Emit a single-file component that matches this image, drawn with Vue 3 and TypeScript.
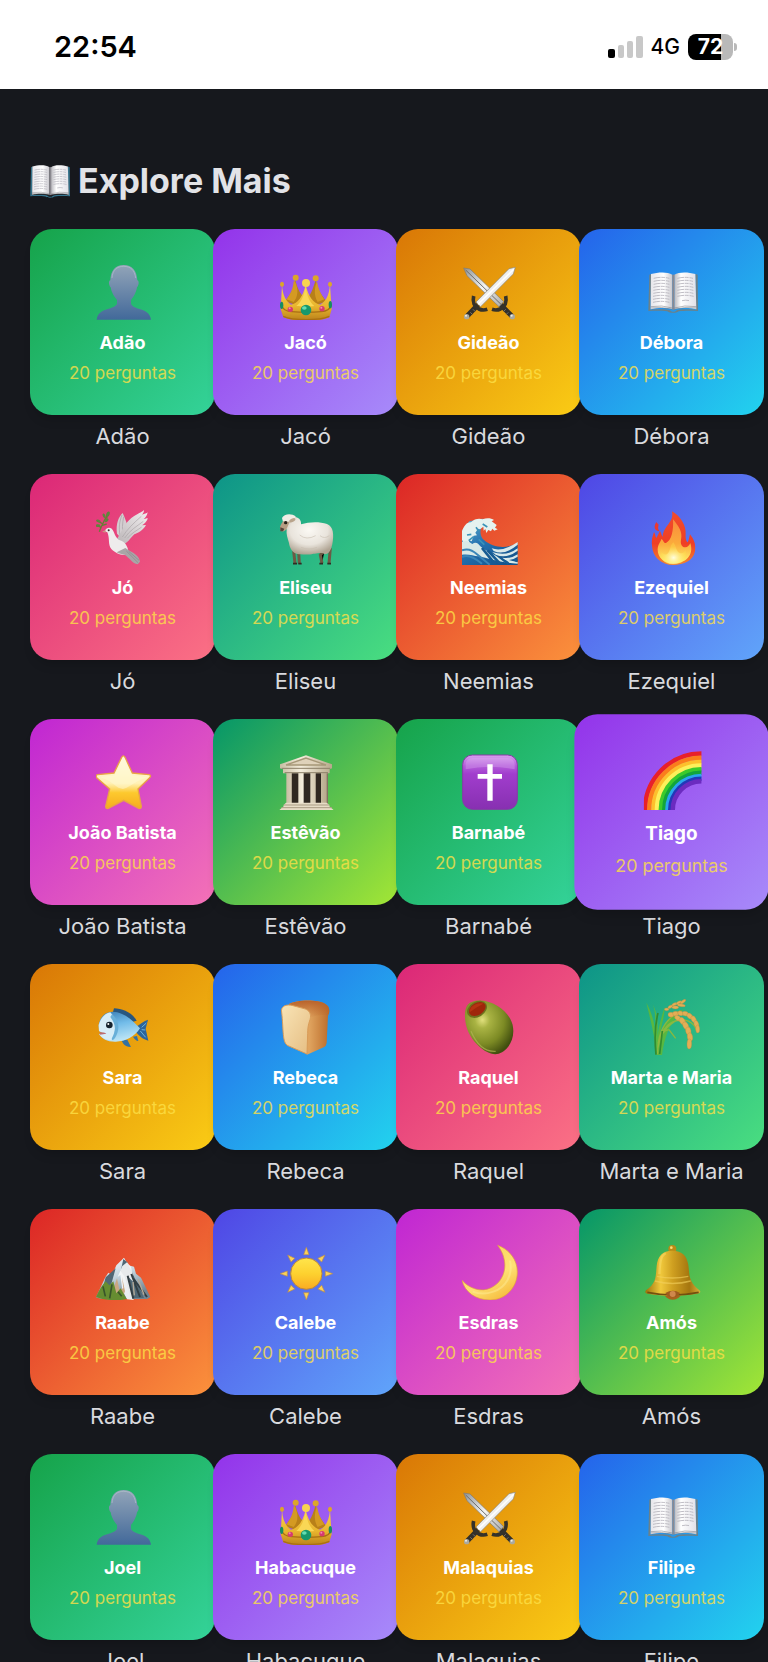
<script setup lang="ts">
interface Character {
  name: string
  icon: string
  tone: string
  raised?: boolean
}

const characters: Character[] = [
  { name: 'Adão', icon: 'person', tone: 'green' },
  { name: 'Jacó', icon: 'crown', tone: 'purple' },
  { name: 'Gideão', icon: 'swords', tone: 'amber' },
  { name: 'Débora', icon: 'book', tone: 'blue' },
  { name: 'Jó', icon: 'dove', tone: 'pink' },
  { name: 'Eliseu', icon: 'sheep', tone: 'teal' },
  { name: 'Neemias', icon: 'wave', tone: 'red' },
  { name: 'Ezequiel', icon: 'fire', tone: 'indigo' },
  { name: 'João Batista', icon: 'star', tone: 'fuchsia' },
  { name: 'Estêvão', icon: 'temple', tone: 'lime' },
  { name: 'Barnabé', icon: 'cross', tone: 'green' },
  { name: 'Tiago', icon: 'rainbow', tone: 'purple', raised: true },
  { name: 'Sara', icon: 'fish', tone: 'amber' },
  { name: 'Rebeca', icon: 'bread', tone: 'blue' },
  { name: 'Raquel', icon: 'olive', tone: 'pink' },
  { name: 'Marta e Maria', icon: 'rice', tone: 'teal' },
  { name: 'Raabe', icon: 'mountain', tone: 'red' },
  { name: 'Calebe', icon: 'sun', tone: 'indigo' },
  { name: 'Esdras', icon: 'moon', tone: 'fuchsia' },
  { name: 'Amós', icon: 'bell', tone: 'lime' },
  { name: 'Joel', icon: 'person', tone: 'green' },
  { name: 'Habacuque', icon: 'crown', tone: 'purple' },
  { name: 'Malaquias', icon: 'swords', tone: 'amber' },
  { name: 'Filipe', icon: 'book', tone: 'blue' },
]

const rainbowBands = [
  { r: 161, color: '#e8202a' },
  { r: 149, color: '#fb7d1c' },
  { r: 137, color: '#fdc02c' },
  { r: 127, color: '#fdf05a' },
  { r: 116, color: '#3ccb2b' },
  { r: 106, color: '#12a53c' },
  { r: 97, color: '#2aa6ee' },
  { r: 89, color: '#2338b8' },
  { r: 82, color: '#6b2bc0' },
]

const sunRays = [0, 45, 90, 135, 180, 225, 270, 315]
</script>

<template>
  <div class="page">
    <svg class="sprites" aria-hidden="true">
      <defs>
        <linearGradient id="g-person" x1="0" y1="0" x2="0" y2="1">
          <stop offset="0" stop-color="#92a4b8" /><stop offset="1" stop-color="#42699a" />
        </linearGradient>
        <linearGradient id="g-gold" x1="0" y1="0" x2="0" y2="1">
          <stop offset="0" stop-color="#f8d04c" /><stop offset="0.6" stop-color="#e8b52e" /><stop offset="1" stop-color="#b9801a" />
        </linearGradient>
        <linearGradient id="g-blade" x1="0" y1="0" x2="1" y2="1">
          <stop offset="0" stop-color="#8d9296" /><stop offset="0.5" stop-color="#f4f4f2" /><stop offset="1" stop-color="#a9a9a6" />
        </linearGradient>
        <linearGradient id="g-page" x1="0" y1="0" x2="1" y2="0">
          <stop offset="0" stop-color="#e6e5ea" /><stop offset="0.6" stop-color="#ffffff" /><stop offset="1" stop-color="#c9c8ce" />
        </linearGradient>
        <linearGradient id="g-page2" x1="0" y1="0" x2="1" y2="0">
          <stop offset="0" stop-color="#b8b7bd" /><stop offset="0.3" stop-color="#ffffff" /><stop offset="1" stop-color="#e2e1e8" />
        </linearGradient>
        <linearGradient id="g-wing" x1="1" y1="0" x2="0" y2="1">
          <stop offset="0" stop-color="#f3f0f1" /><stop offset="1" stop-color="#b9b3b5" />
        </linearGradient>
        <radialGradient id="g-wool" cx="0.5" cy="0.35" r="0.65">
          <stop offset="0" stop-color="#fbf9f4" /><stop offset="0.6" stop-color="#e9e4dc" /><stop offset="1" stop-color="#b0a493" />
        </radialGradient>
        <linearGradient id="g-wave" x1="0" y1="0" x2="0.7" y2="1">
          <stop offset="0" stop-color="#66b2cd" /><stop offset="0.5" stop-color="#2573b2" /><stop offset="1" stop-color="#15548d" />
        </linearGradient>
        <linearGradient id="g-fire" x1="0" y1="0" x2="0" y2="1">
          <stop offset="0" stop-color="#f04c2b" /><stop offset="0.6" stop-color="#ef3f25" /><stop offset="1" stop-color="#f5862e" />
        </linearGradient>
        <linearGradient id="g-flame" x1="0" y1="0" x2="0" y2="1">
          <stop offset="0" stop-color="#f98a3c" /><stop offset="0.55" stop-color="#fbab3b" /><stop offset="1" stop-color="#fff36b" />
        </linearGradient>
        <radialGradient id="g-glow" cx="0.5" cy="0.7" r="0.5">
          <stop offset="0" stop-color="#fffde0" /><stop offset="1" stop-color="#ffe84f" stop-opacity="0.3" />
        </radialGradient>
        <linearGradient id="g-star" x1="0" y1="0" x2="0" y2="1">
          <stop offset="0" stop-color="#fffbe4" /><stop offset="0.52" stop-color="#fff1b5" /><stop offset="0.7" stop-color="#fdc92e" /><stop offset="1" stop-color="#f5ac1d" />
        </linearGradient>
        <linearGradient id="g-stone" x1="0" y1="0" x2="1" y2="0">
          <stop offset="0" stop-color="#c8bda3" /><stop offset="0.4" stop-color="#f4eddb" /><stop offset="1" stop-color="#b7a98c" />
        </linearGradient>
        <linearGradient id="g-cross" x1="0" y1="0" x2="0" y2="1">
          <stop offset="0" stop-color="#d9a0ef" /><stop offset="0.2" stop-color="#b35cd9" /><stop offset="0.35" stop-color="#a13dcd" /><stop offset="1" stop-color="#8730b1" />
        </linearGradient>
        <linearGradient id="g-fish" x1="0" y1="0" x2="0.3" y2="1">
          <stop offset="0" stop-color="#377bb3" /><stop offset="0.5" stop-color="#72bce9" /><stop offset="1" stop-color="#b9e3f5" />
        </linearGradient>
        <linearGradient id="g-crumb" x1="0" y1="0" x2="1" y2="1">
          <stop offset="0" stop-color="#f9e4b6" /><stop offset="1" stop-color="#e5bd82" />
        </linearGradient>
        <linearGradient id="g-crust" x1="0" y1="0" x2="1" y2="0">
          <stop offset="0" stop-color="#d09a5c" /><stop offset="0.5" stop-color="#e0a45f" /><stop offset="1" stop-color="#bb6c2b" />
        </linearGradient>
        <linearGradient id="g-crust-top" x1="0" y1="0" x2="0" y2="1">
          <stop offset="0" stop-color="#b9622a" /><stop offset="1" stop-color="#b9622a" stop-opacity="0" />
        </linearGradient>
        <radialGradient id="g-olive" cx="0.36" cy="0.36" r="0.7">
          <stop offset="0" stop-color="#e1e07d" /><stop offset="0.22" stop-color="#a9b343" /><stop offset="0.65" stop-color="#7c8a24" /><stop offset="1" stop-color="#414e0f" />
        </radialGradient>
        <linearGradient id="g-snow" x1="0" y1="0" x2="0.5" y2="1">
          <stop offset="0" stop-color="#ffffff" /><stop offset="0.5" stop-color="#c7d8e1" /><stop offset="1" stop-color="#728593" />
        </linearGradient>
        <linearGradient id="g-sun" x1="0" y1="0" x2="0" y2="1">
          <stop offset="0" stop-color="#ffe54c" /><stop offset="0.5" stop-color="#fdd12f" /><stop offset="1" stop-color="#f9ab22" />
        </linearGradient>
        <linearGradient id="g-moon" x1="0.3" y1="0" x2="0.9" y2="1">
          <stop offset="0" stop-color="#fbd25c" /><stop offset="0.55" stop-color="#fee174" /><stop offset="1" stop-color="#f4b431" />
        </linearGradient>
        <linearGradient id="g-bell" x1="0" y1="0" x2="1" y2="0">
          <stop offset="0" stop-color="#9c720b" /><stop offset="0.28" stop-color="#f0c83c" /><stop offset="0.5" stop-color="#cf9f20" /><stop offset="0.8" stop-color="#a5760f" /><stop offset="1" stop-color="#dbaf3a" />
        </linearGradient>
      </defs>

      <symbol id="i-person" viewBox="0 0 168 168">
        <path d="M83 3C58 3 44 20 43 49c-6 1-5 15 1 21 3 18 12 29 19 38v9c0 8-10 13-25 17C18 139 4 147 2 167h163c-2-20-17-28-37-33-14-4-23-9-23-17v-9c7-9 15-20 18-38 6-6 7-20 1-21C123 20 108 3 83 3Z" fill="url(#g-person)" />
        <path d="M48 42C50 18 62 7 83 7s33 11 36 35" fill="none" stroke="#b3c0cc" stroke-width="3" opacity="0.7" />
      </symbol>

      <symbol id="i-crown" viewBox="0 0 168 168">
        <path d="M48 44C47 72 34 90 18 112l65 22 60-22c-18-22-30-40-32-68-9 32-18 54-30 60-14-8-26-28-33-60Z" fill="#b88018" />
        <path d="M44 52c-2 24-10 40-22 54l22 8c12-14 16-36 4-62Zm70 0c4 24 12 40 22 54l-20 8c-12-20-10-42-2-62Z" fill="#d49a22" />
        <path d="M9 64c2 30 12 48 27 58 20-4 36-24 44-60 8 36 24 56 44 60 17-10 26-28 29-58l5 72-7 24c-28 14-108 14-138 0L5 136Z" fill="url(#g-gold)" />
        <path d="M80 68c-5 28-14 46-28 58 12 2 40 2 54 0-14-12-22-30-26-58Z" fill="#f9d755" />
        <path d="M7 122c4 16 14 20 30 21 28 2 64 2 90 0 16-1 26-6 30-20M13 157c28 13 108 13 138 0" fill="none" stroke="#a96f13" stroke-width="4" />
        <g fill="#dca62a"><circle cx="50" cy="41" r="9" /><circle cx="110" cy="43" r="9" /><ellipse cx="9" cy="61" rx="6" ry="8" /><ellipse cx="153" cy="61" rx="6" ry="8" /></g>
        <circle cx="81" cy="57" r="12" fill="#f8d451" />
        <circle cx="81" cy="138" r="16" fill="#17986c" /><ellipse cx="76" cy="132" rx="7" ry="5" fill="#64ddb2" />
        <circle cx="34" cy="136" r="8" fill="#d53a72" /><circle cx="129" cy="134" r="8" fill="#d53a72" />
        <circle cx="32" cy="133" r="3" fill="#f28caf" /><circle cx="127" cy="131" r="3" fill="#f28caf" />
        <ellipse cx="8" cy="124" rx="5" ry="11" fill="#168d63" /><ellipse cx="154" cy="122" rx="5" ry="11" fill="#168d63" />
      </symbol>

      <symbol id="i-swords" viewBox="0 0 168 168">
        <path d="M48 122 15 157M116 122l34 35" stroke="#33302a" stroke-width="15" />
        <path d="m42 126 5 6m-14 4 6 6m-14 3 6 6m92-25-6 6m14 4-6 6m14 3-6 6" stroke="#77736a" stroke-width="3" />
        <path d="m5 12 19 3 101 98-14 15L15 35Z" fill="url(#g-blade)" stroke="#7f7a72" stroke-width="2" />
        <path d="m11 18 106 103" stroke="#6e6e6e" stroke-width="3" />
        <path d="m160 10-19 4L42 114l14 14 98-98Z" fill="url(#g-blade)" stroke="#8b867c" stroke-width="2" />
        <path d="M155 16 48 121" stroke="#ffffff" stroke-width="4" />
        <path d="M35 96c-4 18 2 33 16 39 8 4 16 4 25 1M131 96c4 18-2 33-16 39-8 4-16 4-25 1" fill="none" stroke="#35322a" stroke-width="11" />
        <circle cx="14" cy="158" r="8" fill="#aaa99f" /><circle cx="151" cy="158" r="8" fill="#aaa99f" />
        <circle cx="12" cy="155" r="3" fill="#eeeeea" /><circle cx="149" cy="155" r="3" fill="#eeeeea" />
      </symbol>

      <symbol id="i-book" viewBox="8 20 150 126">
        <path d="m12 31 6-2-3 107c24-2 48-2 59 2 6 6 14 6 20 0 12-4 34-4 58-2l-2-107 7 2 1 109c-22-1-43-1-58 1-8 6-26 6-34 0-16-2-38-2-57-1Z" class="cover" />
        <path d="M17 29c22-6 50-7 64 2v104c-14-5-46-5-65 0Z" fill="url(#g-page)" />
        <path d="M87 31c14-9 42-8 63-2l3 106c-18-5-50-5-66 0Z" fill="url(#g-page2)" />
        <path d="M81 31h6v105h-6Z" fill="#8b8990" />
        <g fill="none" stroke="#b4b2bb" stroke-width="2.5" stroke-dasharray="21 2 11 3">
          <path d="M25 42q23-6 47 0M25 51q23-6 47 0M25 60q23-6 47 0M24 69q24-6 48 0M24 78q24-6 48 0M24 87q24-6 48 0M23 96q24-6 49 0M23 105q24-6 49 0M23 114q24-6 49 0" />
          <path d="M96 42q23-6 47 0M96 51q23-6 47 0M96 60q23-6 47 0M96 69q24-6 48 0M96 78q24-6 48 0M96 87q24-6 48 0M96 96q24-6 49 0M110 109q12-3 22 0" />
        </g>
        <path d="M16 127q34-6 65 4M87 131q30-10 66-4M16 131q34-5 65 4M87 135q30-9 66-4" fill="none" stroke="#77777a" stroke-width="1.5" />
      </symbol>

      <symbol id="i-dove" viewBox="0 0 168 168">
        <path d="M36 13C26 34 16 50 10 68M20 45 5 35m18 2 12-15M15 55 2 48m17 1 13-4" fill="none" stroke="#657e35" stroke-width="4" />
        <g fill="#5f853c"><ellipse cx="36" cy="15" rx="5" ry="8" transform="rotate(25 36 15)" /><ellipse cx="24" cy="20" rx="4" ry="7" transform="rotate(-20 24 20)" /><ellipse cx="7" cy="36" rx="7" ry="4" transform="rotate(20 7 36)" /><ellipse cx="32" cy="34" rx="7" ry="4" transform="rotate(-45 32 34)" /><ellipse cx="6" cy="50" rx="7" ry="4" /></g>
        <path d="M63 74C59 43 68 24 80 12c7 16 15 34 17 54L78 91Z" fill="#d3cdd0" />
        <path d="M78 18c-8 21-10 35-6 63M83 23c-4 23-5 35-2 60" stroke="#a89fa3" stroke-width="2" fill="none" />
        <path d="M62 92C76 70 86 43 106 27c18-13 30-16 38-24 0 7-3 11-6 14 8-3 14-4 17-7-2 10-6 15-12 20 6-1 10-1 13-3-3 10-10 17-18 22l12-1c-9 16-24 24-35 28-12 12-20 26-36 33Z" fill="url(#g-wing)" />
        <path d="M79 84C94 60 113 42 136 22M86 87c14-22 36-35 56-50M94 88c12-16 30-24 43-34" fill="none" stroke="#aaa4a7" stroke-width="2" />
        <path d="M27 67c1-11 17-15 23-4 6 10 10 27 22 31 16 5 24 20 25 34l-1 8c-18 5-38-3-50-16-11-13-4-33-12-50Z" fill="#eeecec" />
        <path d="m88 117 14 9c15 7 28 18 30 32l-7 8c-16-3-25-20-39-29-10-1-16-3-24-7Z" fill="#a9a5a7" />
        <path d="m91 126 35 35M98 127l31 27" stroke="#89878b" stroke-width="2" />
        <circle cx="38" cy="64" r="3" fill="#352b2a" /><path d="m28 63-10 5 11 3Z" fill="#ca9482" />
      </symbol>

      <symbol id="i-sheep" viewBox="0 0 168 168">
        <path d="M44 126 48 164M59 130l2 34M137 124l-13 14 5 25M154 117l-4 47" stroke="#6c5b45" stroke-width="9" />
        <path d="M42 164h12m4 0h10m53 0h11m13 0h11" stroke="#302d24" stroke-width="5" />
        <path d="M30 26c24-9 38 5 36 20 25-8 55-9 78-1 20 7 21 34 16 60-4 20-11 30-22 31-10-8-24 0-35-2-18 5-31 1-43 2-20-2-28-19-30-34-4-14-9-28-7-40-9-15-7-29 7-36Z" fill="url(#g-wool)" />
        <path d="M9 27C14 14 38 12 50 22c-6 19-23 20-38 17Z" fill="#f0ede5" />
        <path d="m12 37 20 1-8 19c-4 10-15 14-20 7-4-8 3-20 8-27Z" fill="#b69d83" />
        <path d="m4 55 12 4-4 8H4Z" fill="#55443b" /><circle cx="20" cy="41" r="5" fill="#262019" />
        <ellipse cx="40" cy="34" rx="10" ry="5" fill="#b9a48c" transform="rotate(-28 40 34)" />
        <path d="M62 78q20 17 48 2M66 115q24 10 48 0M123 80q13 11 28 0" fill="none" stroke="#c8beb0" stroke-width="3" opacity="0.6" />
      </symbol>

      <symbol id="i-wave" viewBox="0 0 168 168">
        <path d="M0 170V66l22-29 38-8c18 1 27 5 31 10L66 48c-17 11-11 37 0 45 29 25 68 26 101 10v67Z" fill="url(#g-wave)" />
        <path d="M0 92V66C6 52 13 39 27 40c10-12 27-13 35-9 11-5 26-4 34 2l-7 4 15 11-5 8 8 5-10 4-6-6-4 8-8-4-6 9-3-12-5 5-1-12-10 8-6-2-8 12 5 8-10 1-6 17-8-3 1 14-9-3-2 12Z" fill="#e5f2ef" />
        <path d="m15 78 13-2m-8 19 15-12m7-28 8 11m12-21 14 9M0 107h22m28-16 17 16" stroke="#3b93b8" stroke-width="5" />
        <path d="M0 99c15-7 22 0 31 6 10-8 18-2 24 7 26 22 60 36 112 47v5C112 161 80 148 50 142c-17-2-30-8-50-5Z" fill="#d8e9e7" />
        <path d="m60 117 35 43m-18-36 37 40m-18-34 43 34m-19-31 46 23" stroke="#175c93" stroke-width="8" />
        <path d="M89 118q33 12 78-19v8q-40 34-72 19M91 129q43 15 76-11v7q-34 26-66 12M121 146q26 4 46-10v7q-18 13-37 10" fill="#d9e9ea" />
        <path d="M0 124q23-9 45 12l38 31M0 144q22-12 60 20" stroke="#3a86b8" stroke-width="6" fill="none" />
      </symbol>

      <symbol id="i-fire" viewBox="0 0 168 168">
        <path d="M34 39c2 5 9 5 6 12-2 7 0 11 4 16-16-2-19-13-10-28Z" fill="#eb3930" />
        <path d="M85 168c-37 0-62-25-64-58-2-20 3-31 6-41 4 5 4 14 7 18 5-7 8-17 11-21 4 5 4 14 8 17 3-34 35-42 28-76 25 14 43 43 41 68-1 15 2 22 6 25 5-8 4-15 7-24 12 15 18 30 15 51-5 28-33 41-65 41Z" fill="url(#g-fire)" />
        <path d="M84 164c-27 0-46-20-46-42 0-17 10-24 11-32 7 3 7 14 14 12 17-8 23-38 21-71 15 18 30 38 24 61-3 15 5 23 12 23 7 1 12-5 16-13 12 37-15 62-52 62Z" fill="url(#g-flame)" />
        <path d="M84 166c-29 0-40-17-34-36 5 8 14 9 20 1 7-10 5-21 15-31 8 11 8 22 14 28 9 9 18 5 22-4 8 24-8 42-37 42Z" fill="url(#g-glow)" />
      </symbol>

      <symbol id="i-star" viewBox="0 0 168 168">
        <path d="M77 10q5-9 10 0l22 47 50 5q9 3 1 10l-34 33 10 52q0 9-8 6l-45-24-46 24q-8 2-8-6l12-52L3 72q-6-8 2-10l49-5Z" fill="url(#g-star)" stroke="#eaa345" stroke-width="4" />
        <path d="m12 69 44-5 26-52 27 52 44 6-27 11-34 20-11 4-14-4-27-20Z" fill="#fff9d6" opacity="0.5" />
      </symbol>

      <symbol id="i-temple" viewBox="0 0 168 168">
        <path d="M25 52h120v102H25Z" fill="#302821" />
        <path d="M25 52h13v102H25Zm35 0h12v102H60Zm36 0h13v102H96Zm37 0h14v102h-14Z" fill="#817360" />
        <path d="M22 50h16v104H22ZM58 50h16v104H58Zm36 0h16v104H94Zm32 0h17v104h-17Z" fill="url(#g-stone)" />
        <path d="M81 4 3 31v12l9 3v12h140V46l7-3V31Z" fill="url(#g-stone)" />
        <path d="M81 12 21 33h120Z" fill="#dfd2ba" stroke="#a79878" stroke-width="4" />
        <path d="M8 43h146M17 56h130" stroke="#8d8069" stroke-width="3" />
        <path d="M21 146h122l8 7v4l14 12H0l14-12v-4Z" fill="#e6dcc6" />
        <path d="M14 153h137M7 161h152" stroke="#aa9c84" stroke-width="3" />
      </symbol>

      <symbol id="i-cross" viewBox="0 0 168 168">
        <rect x="2" y="3" width="164" height="163" rx="29" fill="url(#g-cross)" stroke="#873aa7" stroke-width="3" />
        <path d="M11 46V31Q12 13 32 12h104q21 1 22 20v14Q84 31 11 46Z" fill="#e6b9f4" opacity="0.3" />
        <path d="M76 31h16v29h28v14H92v66H76V74H47V60h29Z" fill="#ffffff" />
      </symbol>

      <symbol id="i-rainbow" viewBox="0 0 168 168">
        <path v-for="band in rainbowBands" :key="band.r" :d="`M${165 - band.r} 168A${band.r} ${band.r} 0 0 1 165 ${168 - band.r}`" fill="none" :stroke="band.color" stroke-width="13" />
      </symbol>

      <symbol id="i-fish" viewBox="0 0 168 168">
        <path d="m49 46 5-18c25 1 55 13 68 37l-27 8Z" fill="#28567f" />
        <path d="M120 84c14-9 23-19 36-22l-7 27 8 36c-17-5-25-13-38-27Z" fill="#2c659b" />
        <path d="m76 124 18-2 11 22c-12-1-19-4-23-10Zm35-11 12-2 4 15q-9-1-16-13Z" fill="#3371a2" />
        <path d="M8 78c6-37 36-48 70-33 22 9 36 25 54 43-16 25-45 41-75 40-24 0-39-8-48-23l13-2-13-7Z" fill="url(#g-fish)" />
        <path d="M8 78c7-22 17-34 35-38 17 18 20 51 4 84-19-1-31-8-38-19l13-2-13-7Z" fill="#d7edf7" />
        <path d="M48 46c22 17 25 44 9 71-6 9-13 7-8-2 12-24 10-40-6-61Z" fill="#68afd8" />
        <path d="M11 100q15 0 20 4l-20 3Z" fill="#bd6c70" />
        <circle cx="40" cy="78" r="10" fill="#17242e" /><circle cx="37" cy="75" r="3" fill="#fff" />
        <path d="m137 85 14-13m-14 20 11 1m-15 3 16 19" stroke="#6fb4db" stroke-width="3" />
      </symbol>

      <symbol id="i-bread" viewBox="0 0 168 168">
        <path d="M30 15C52 1 118 1 138 14c16 8 15 26 9 36l-4 82q-1 9-9 13l-50 22-30-57Z" fill="url(#g-crust)" />
        <path d="M30 15C52 1 118 1 138 14c16 8 15 26 9 36q-26-6-54 6L30 26Z" fill="url(#g-crust-top)" />
        <path d="M8 40C4 22 22 14 42 20l30 8c20 4 26 18 21 34-6 16-7 28-7 42l-2 61-57-25C9 132 14 92 8 40Z" fill="url(#g-crumb)" stroke="#d99c58" stroke-width="3" />
      </symbol>

      <symbol id="i-olive" viewBox="0 0 168 168">
        <path d="M24 11C68-9 125 23 145 60c22 40 1 94-35 104-35 10-80-35-93-70C6 65 4 22 24 11Z" fill="url(#g-olive)" />
        <ellipse cx="45" cy="31" rx="32" ry="23" fill="#6e701e" transform="rotate(-31 45 31)" />
        <ellipse cx="46" cy="30" rx="27" ry="18" fill="#9f260b" transform="rotate(-31 46 30)" />
        <path d="M23 40C21 24 43 9 64 14 52 20 38 28 23 40Z" fill="#b53312" />
        <path d="M27 97c18 42 44 62 74 60" fill="none" stroke="#b0b455" stroke-width="4" opacity="0.7" />
      </symbol>

      <symbol id="i-rice" viewBox="0 0 168 168">
        <path d="M34 168C31 117 18 70 4 11c17 31 26 62 27 100 1-38 1-76-8-95 15 28 17 59 14 98 5-37 14-65 22-89 0 26-11 56-16 93 10-40 34-79 74-87-33 25-57 69-66 137Z" fill="#58b840" />
        <path d="M38 166C37 114 52 67 98 42M39 133c6-26 22-57 51-67 27-9 57-1 67 34M39 146c8-46 25-62 49-78 23-12 42 11 45 74M39 138c8-31 20-48 34-45l19 25" fill="none" stroke="#8ab83f" stroke-width="4" />
        <path d="M33 167C29 128 30 76 39 42M44 165l8-69" fill="none" stroke="#328c2f" stroke-width="5" />
        <g fill="#e2ae55" stroke="#b98a40" stroke-width="1">
          <ellipse cx="65" cy="31" rx="7" ry="4" /><ellipse cx="76" cy="23" rx="8" ry="4" transform="rotate(-25 76 23)" /><ellipse cx="88" cy="16" rx="8" ry="4" transform="rotate(-25 88 16)" /><ellipse cx="101" cy="11" rx="9" ry="4" transform="rotate(-30 101 11)" /><ellipse cx="114" cy="8" rx="10" ry="4" transform="rotate(-35 114 8)" /><ellipse cx="109" cy="19" rx="12" ry="4" transform="rotate(9 109 19)" /><ellipse cx="91" cy="25" rx="10" ry="5" />
          <ellipse cx="78" cy="47" rx="9" ry="7" /><ellipse cx="92" cy="44" rx="9" ry="7" /><ellipse cx="107" cy="43" rx="9" ry="7" transform="rotate(20 107 43)" /><ellipse cx="121" cy="44" rx="9" ry="7" transform="rotate(20 121 44)" /><ellipse cx="134" cy="51" rx="10" ry="7" transform="rotate(45 134 51)" /><ellipse cx="146" cy="61" rx="11" ry="7" transform="rotate(60 146 61)" /><ellipse cx="154" cy="75" rx="11" ry="7" transform="rotate(73 154 75)" /><ellipse cx="158" cy="90" rx="12" ry="6" transform="rotate(86 158 90)" />
          <ellipse cx="98" cy="57" rx="10" ry="7" transform="rotate(34 98 57)" /><ellipse cx="112" cy="66" rx="12" ry="8" transform="rotate(55 112 66)" /><ellipse cx="122" cy="80" rx="12" ry="8" transform="rotate(65 122 80)" /><ellipse cx="130" cy="96" rx="12" ry="8" transform="rotate(78 130 96)" /><ellipse cx="135" cy="114" rx="13" ry="8" transform="rotate(81 135 114)" /><ellipse cx="133" cy="135" rx="15" ry="7" transform="rotate(92 133 135)" />
        </g>
      </symbol>

      <symbol id="i-mountain" viewBox="0 0 168 168">
        <path d="M0 160 28 100l9-14 11 8 13-30 23-23 13 23 17 4 6 21 15 12 28 58-9 6H16Z" fill="url(#g-snow)" />
        <path d="m82 45-8 37 12 16 8 27 8 37h42L94 55Zm-23 28-13 47-18 35-11-10 12-45Z" fill="#506875" />
        <path d="M79 66 65 99l8-6 6 46 14 27 20 2-15-68 17 17-10-48-12-14Z" fill="#f7f8f8" opacity="0.9" />
        <path d="M63 103 51 138l-19 28 45 2 10-26-9-43 4 34-12 4Z" fill="#cba782" />
        <path d="M0 159c9-21 18-34 29-47l11 12 12-12 9 36 13-15 18 32c-26 7-67 4-92-6Z" fill="#668d31" />
        <path d="m21 127 7 30m20-36-7 42m36-6-11-14" stroke="#38542b" stroke-width="5" />
        <path d="m95 95 17 69m-6-74 26 69m-19-54 40 54" stroke="#323e43" stroke-width="6" />
        <path d="m111 114 4 40m11-48 18 46" stroke="#b5aa98" stroke-width="4" />
      </symbol>

      <symbol id="i-sun" viewBox="0 0 168 168">
        <g v-for="angle in sunRays" :key="angle" :transform="`rotate(${angle} 82 89)`">
          <path d="m82 10 8 22H74Z" fill="#fbd158" stroke="#b68b54" stroke-width="2" />
        </g>
        <circle cx="82" cy="89" r="47" fill="url(#g-sun)" stroke="#bd873c" stroke-width="3" />
      </symbol>

      <symbol id="i-moon" viewBox="0 0 168 168">
        <path d="M107 4c34 12 59 42 59 80 0 48-37 84-82 84C41 168 8 144 0 109c21 24 57 38 88 22 41-20 57-76 19-127Z" fill="url(#g-moon)" stroke="#dfa33d" stroke-width="2" />
        <path d="M144 50c9 45-13 80-50 93-22 8-44 7-62 0" fill="none" stroke="#fff2a2" stroke-width="6" opacity="0.4" />
      </symbol>

      <symbol id="i-bell" viewBox="0 0 168 168">
        <circle cx="82" cy="15" r="12" fill="#bb8a16" /><circle cx="79" cy="11" r="4" fill="#ffdc73" />
        <ellipse cx="83" cy="147" rx="25" ry="20" fill="#a8631c" />
        <path d="M82 20c30 0 44 16 48 43 4 30 0 52 35 77 3 6-2 9-9 9-49 8-99 8-148 0-7-1-9-5-5-10 32-22 29-42 32-74 3-28 17-45 47-45Z" fill="url(#g-bell)" />
        <path d="M30 111q52 15 107 0M36 97q46 10 94 0" fill="none" stroke="#f3d15d" stroke-width="4" opacity="0.6" />
        <path d="M7 145q76 16 154 0" fill="none" stroke="#73500f" stroke-width="5" />
        <path d="M62 28c-17 9-17 34-19 62" fill="none" stroke="#ffe783" stroke-width="7" opacity="0.35" />
        <path d="M61 147a24 21 0 0 0 44 0q-21-14-44 0Z" fill="#9f5b1d" /><circle cx="83" cy="150" r="9" fill="#cf884c" />
      </symbol>
    </svg>

    <header class="status">
      <time class="clock">22:54</time>
      <div class="indicators">
        <svg class="signal" viewBox="0 0 35 22" role="img" aria-label="Sinal">
          <rect x="0" y="13" width="7" height="9" rx="2" fill="#000" />
          <rect x="10" y="9" width="6" height="13" rx="2" fill="#c8c8c8" />
          <rect x="19" y="5" width="6" height="17" rx="2" fill="#c8c8c8" />
          <rect x="28" y="0" width="7" height="22" rx="2" fill="#c8c8c8" />
        </svg>
        <span class="network">4G</span>
        <span class="battery"><span class="charge">72</span></span>
      </div>
    </header>

    <main class="content">
      <h1 class="heading">
        <svg class="heading-icon" aria-hidden="true"><use href="#i-book" /></svg>
        <span>Explore Mais</span>
      </h1>
      <ul class="grid">
        <li v-for="item in characters" :key="item.name" class="item">
          <button type="button" class="card" :class="[item.tone, { raised: item.raised }]">
            <svg class="icon" :class="item.icon" aria-hidden="true"><use :href="`#i-${item.icon}`" /></svg>
            <span class="name">{{ item.name }}</span>
            <span class="count">20 perguntas</span>
          </button>
          <span class="label">{{ item.name }}</span>
        </li>
      </ul>
    </main>
  </div>
</template>

<style>
body {
  background: #16181d;
}
</style>

<style scoped>
.page {
  height: 100vh;
  overflow: hidden;
  background: #16181d;
  color: #e2e3e7;
  font-family: Inter, "Liberation Sans", sans-serif;
}
.sprites {
  position: absolute;
  width: 0;
  height: 0;
}
.status {
  display: flex;
  align-items: center;
  justify-content: space-between;
  height: 89px;
  padding: 4px 31px 0 54px;
  box-sizing: border-box;
  background: #fff;
  color: #000;
}
.clock {
  font-size: 29px;
  line-height: 36px;
  font-weight: 600;
}
.indicators {
  display: flex;
  align-items: center;
  gap: 8px;
}
.signal {
  width: 35px;
  height: 22px;
}
.network {
  font-size: 21px;
  line-height: 26px;
  font-weight: 500;
}
.battery {
  position: relative;
  width: 45px;
  height: 26px;
  margin-right: 4px;
  border-radius: 8px;
  background: linear-gradient(90deg, #000 73%, #b9b9b9 73%);
}
.battery::after {
  content: "";
  position: absolute;
  left: 46px;
  top: 9px;
  width: 3px;
  height: 8px;
  border-radius: 0 4px 4px 0;
  background: #b9b9b9;
}
.charge {
  display: block;
  color: #fff;
  font-size: 21px;
  line-height: 26px;
  font-weight: 700;
  text-align: center;
}
.content {
  padding: 72px 6px 0 30px;
}
.heading {
  display: flex;
  align-items: center;
  gap: 8px;
  height: 40px;
  margin: 0 0 28px;
  font-size: 34px;
  line-height: 40px;
  font-weight: 700;
}
.heading-icon {
  width: 40px;
  height: 34px;
  color: #37758e;
}
.grid {
  display: grid;
  grid-template-columns: repeat(4, 1fr);
  row-gap: 22px;
  margin: 0;
  padding: 0;
  list-style: none;
}
.item {
  display: flex;
  flex-direction: column;
  min-width: 0;
}
.card {
  display: flex;
  flex-direction: column;
  align-items: center;
  width: calc(100% + 2px);
  height: 186px;
  padding: 35px 0 0;
  border: 0;
  border-radius: 22px;
  box-shadow: 0 8px 12px -6px rgba(0, 0, 0, 0.25);
  font-family: inherit;
  cursor: pointer;
}
.raised {
  transform: scale(1.05);
}
.icon {
  width: 56px;
  height: 56px;
  margin: 0 0 11px 3px;
  color: #6b8189;
}
.icon.book {
  width: 50px;
  height: 42px;
  margin: 7px 0 18px 3px;
}
.cover {
  fill: currentColor;
}
.name {
  color: #fff;
  font-size: 18px;
  line-height: 24px;
  font-weight: 700;
}
.count {
  margin-top: 6px;
  color: #fde047;
  font-size: 17px;
  line-height: 24px;
  opacity: 0.8;
}
.label {
  width: calc(100% + 2px);
  margin-top: 5px;
  color: #d9dade;
  font-size: 22px;
  line-height: 32px;
  text-align: center;
  white-space: nowrap;
}
.green { background: linear-gradient(135deg, #16a34a, #34d399); }
.purple { background: linear-gradient(135deg, #9333ea, #a78bfa); }
.amber { background: linear-gradient(135deg, #d97706, #facc15); }
.blue { background: linear-gradient(135deg, #2563eb, #22d3ee); }
.pink { background: linear-gradient(135deg, #db2777, #fb7185); }
.teal { background: linear-gradient(135deg, #0d9488, #4ade80); }
.red { background: linear-gradient(135deg, #dc2626, #fb923c); }
.indigo { background: linear-gradient(135deg, #4f46e5, #60a5fa); }
.fuchsia { background: linear-gradient(135deg, #c026d3, #f472b6); }
.lime { background: linear-gradient(135deg, #059669, #a3e635); }
</style>
